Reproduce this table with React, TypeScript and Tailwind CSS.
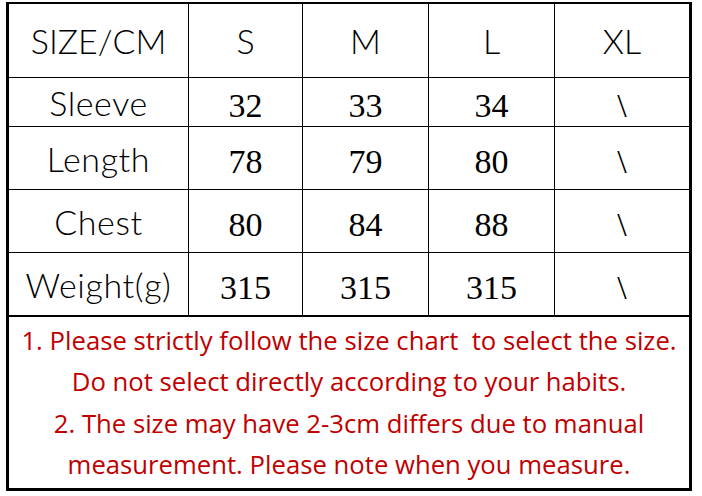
import React from "react";

const sans = { fontFamily: "Lato, 'Open Sans', sans-serif" };

const rows = [
  { label: "Sleeve", vals: ["32", "33", "34"], h: "h-[49px]" },
  { label: "Length", vals: ["78", "79", "80"], h: "h-[63px]" },
  { label: "Chest", vals: ["80", "84", "88"], h: "h-[63px]" },
  { label: "Weight(g)", vals: ["315", "315", "315"], h: "h-[62px]" },
];

export default function App() {
  return (
    <div className="w-[702px] h-[496px] bg-white pt-[2px] pl-[6px]">
      <div className="w-[686px] h-[489px] border-l-[3px] border-t-2 border-r-[3px] border-b-[3px] border-black flex flex-col">
        <div className="grid grid-cols-[180px_114px_126px_126px_1fr] border-b-2 border-black">
          {["SIZE/CM", "S", "M", "L", "XL"].map((t, i) => (
            <div
              key={t}
              className={`h-[74px] flex items-center justify-center border-b border-black text-[34px] font-light text-black ${i < 4 ? "border-r" : ""}`}
              style={sans}
            >
              {t}
            </div>
          ))}
          {rows.map((r, ri) => (
            <React.Fragment key={r.label}>
              <div
                className={`${r.h} flex items-center justify-center border-r border-black text-[34px] font-light tracking-[0.6px] text-black ${ri < 3 ? "border-b" : ""}`}
                style={sans}
              >
                {r.label}
              </div>
              {r.vals.map((v, vi) => (
                <div
                  key={vi}
                  className={`${r.h} flex items-center justify-center pt-[6px] border-r border-black text-[34px] text-black font-['Liberation_Serif',serif] ${ri < 3 ? "border-b" : ""}`}
                >
                  {v}
                </div>
              ))}
              <div
                className={`${r.h} flex items-center justify-center pt-[6px] border-black text-[34px] text-black font-['Liberation_Serif',serif] ${ri < 3 ? "border-b" : ""}`}
              >
                \
              </div>
            </React.Fragment>
          ))}
        </div>
        <div className="flex-1 flex flex-col items-center justify-center text-[#c00000] text-[25.7px] leading-[41.5px] font-['Open_Sans',sans-serif] whitespace-pre">
          <div>1. Please strictly follow the size chart  to select the size.</div>
          <div>Do not select directly according to your habits.</div>
          <div>2. The size may have 2-3cm differs due to manual</div>
          <div>measurement. Please note when you measure.</div>
        </div>
      </div>
    </div>
  );
}
